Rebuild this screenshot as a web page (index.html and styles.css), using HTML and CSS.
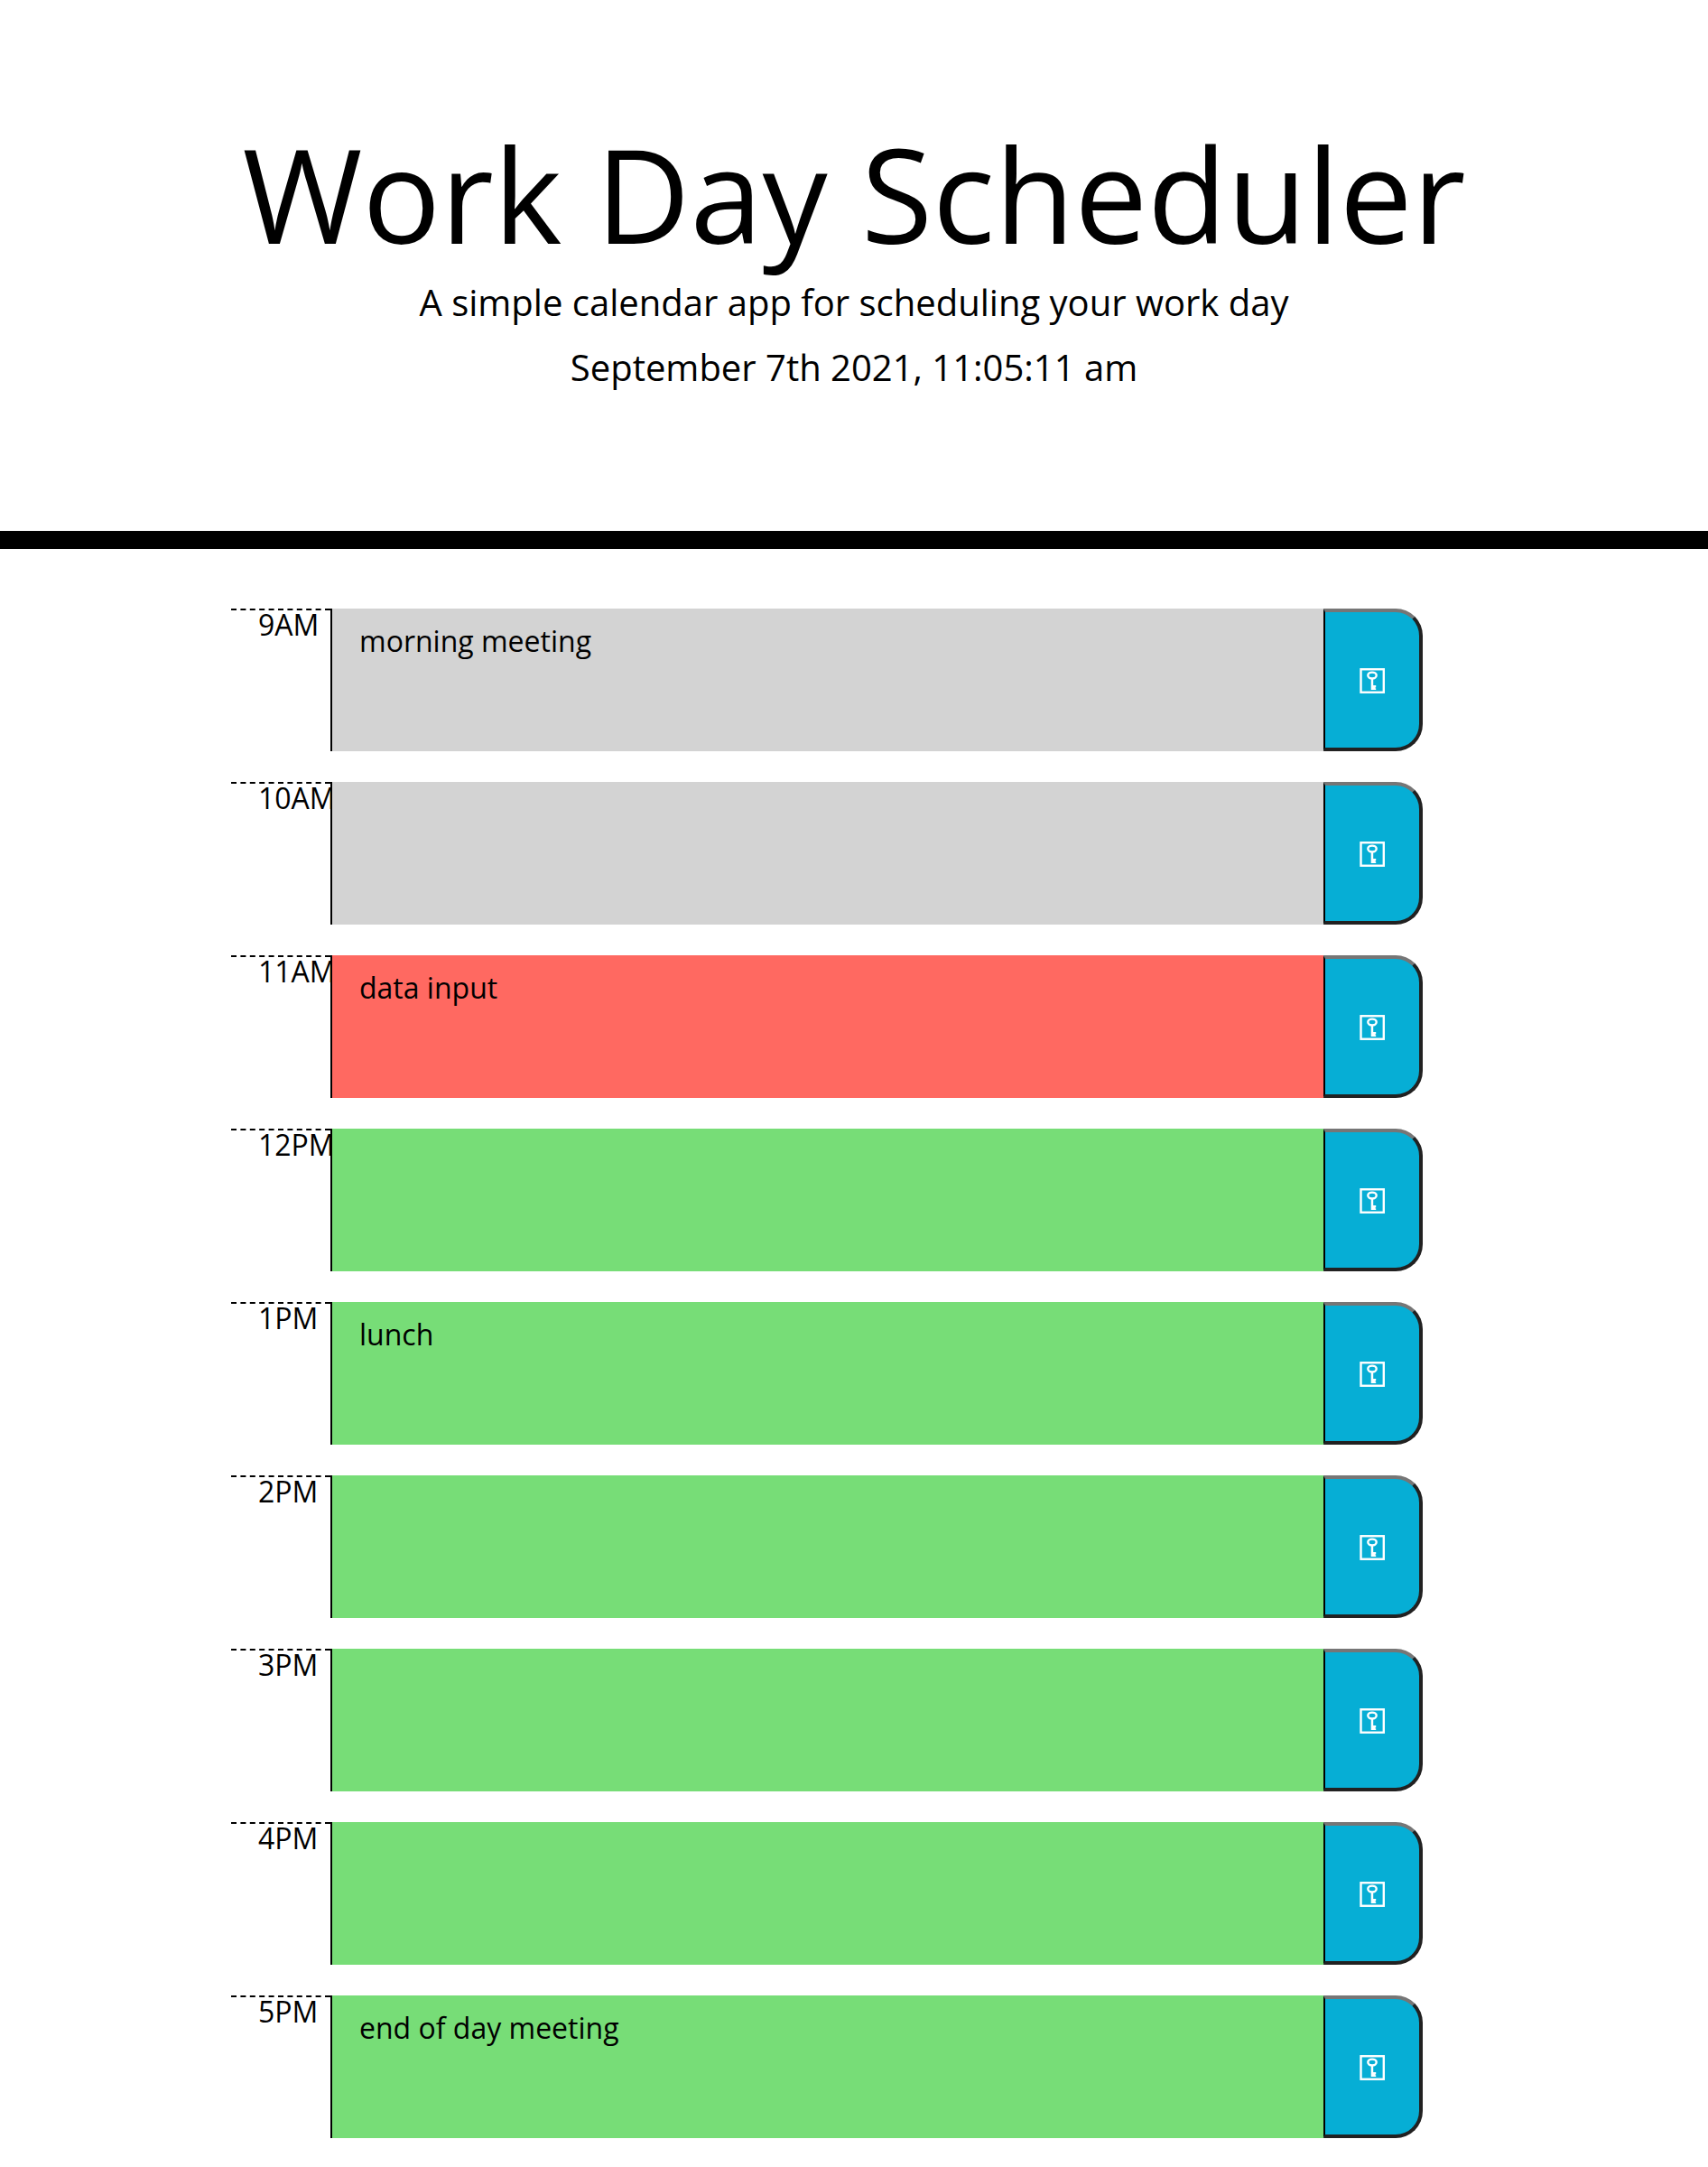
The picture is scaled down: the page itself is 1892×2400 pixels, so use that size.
FILE: index.html
```html
<!DOCTYPE html>
<html lang="en">
<head>
<meta charset="utf-8">
<title>Work Day Scheduler</title>
<link rel="stylesheet" href="styles.css">
</head>
<body>
<svg class="sprite" aria-hidden="true">
  <symbol id="key" viewBox="0 0 28 28">
    <rect x="1.5" y="1.25" width="25.3" height="25.5" fill="none" stroke="#fff" stroke-width="2.4"/>
    <ellipse cx="14" cy="8" rx="4.7" ry="3.4" fill="none" stroke="#fff" stroke-width="2.4"/>
    <path d="M12.7 11h2.5v8h3v2.2l-1.2.8 1.2.6v1.4h-5.5z" fill="#fff"/>
  </symbol>
</svg>
<header class="jumbotron">
  <h1 class="title">Work Day Scheduler</h1>
  <p class="lead">A simple calendar app for scheduling your work day</p>
  <p class="lead">September 7th 2021, 11:05:11 am</p>
</header>
<main class="container">
  <section class="time-block"><div class="hour">9AM</div><div class="description past">morning meeting</div><button class="save" aria-label="Save"><svg class="icon"><use href="#key"/></svg></button></section>
  <section class="time-block"><div class="hour">10AM</div><div class="description past"></div><button class="save" aria-label="Save"><svg class="icon"><use href="#key"/></svg></button></section>
  <section class="time-block"><div class="hour">11AM</div><div class="description present">data input</div><button class="save" aria-label="Save"><svg class="icon"><use href="#key"/></svg></button></section>
  <section class="time-block"><div class="hour">12PM</div><div class="description future"></div><button class="save" aria-label="Save"><svg class="icon"><use href="#key"/></svg></button></section>
  <section class="time-block"><div class="hour">1PM</div><div class="description future">lunch</div><button class="save" aria-label="Save"><svg class="icon"><use href="#key"/></svg></button></section>
  <section class="time-block"><div class="hour">2PM</div><div class="description future"></div><button class="save" aria-label="Save"><svg class="icon"><use href="#key"/></svg></button></section>
  <section class="time-block"><div class="hour">3PM</div><div class="description future"></div><button class="save" aria-label="Save"><svg class="icon"><use href="#key"/></svg></button></section>
  <section class="time-block"><div class="hour">4PM</div><div class="description future"></div><button class="save" aria-label="Save"><svg class="icon"><use href="#key"/></svg></button></section>
  <section class="time-block"><div class="hour">5PM</div><div class="description future">end of day meeting</div><button class="save" aria-label="Save"><svg class="icon"><use href="#key"/></svg></button></section>
</main>
</body>
</html>
```
FILE: styles.css
```css
* { box-sizing: border-box; }
body {
  margin: 0;
  background: #fff;
  color: #000;
  font-family: "Open Sans", sans-serif;
  font-size: 32px;
  line-height: 1;
}
.sprite { display: none; }
.jumbotron {
  height: 608px;
  padding-top: 128px;
  border-bottom: 20px solid #000;
  text-align: center;
}
.title {
  margin: 0 0 4px;
  font-size: 144px;
  font-weight: 400;
  line-height: 173px;
}
.lead {
  margin: 0 0 12px;
  font-size: 40px;
  font-weight: 400;
  line-height: 60px;
}
.container {
  width: 1320px;
  margin: 66px 0 0 256px;
  display: flex;
  flex-direction: column;
  gap: 34px;
}
.time-block { display: flex; height: 158px; }
.hour {
  width: 110px;
  padding-left: 30px;
  border-top: 2px dashed #000;
  line-height: 31px;
}
/* Sits above the hour label, which can run wider than its column. */
.description {
  position: relative;
  width: 1100px;
  padding: 12px 30px;
  border-left: 2px solid #000;
  line-height: 48px;
}
.past { background: #d3d3d3; }
.present { background: #ff6961; }
.future { background: #77dd77; }
.save {
  width: 110px;
  padding: 0;
  display: flex;
  align-items: center;
  justify-content: center;
  border: 4px solid;
  border-width: 4px 4px 4px 2px;
  border-color: #767676 #212121 #212121 #000;
  border-radius: 0 30px 30px 0;
  background: #06aed5;
}
.icon { width: 28px; height: 28px; margin-top: 2px; }
```
